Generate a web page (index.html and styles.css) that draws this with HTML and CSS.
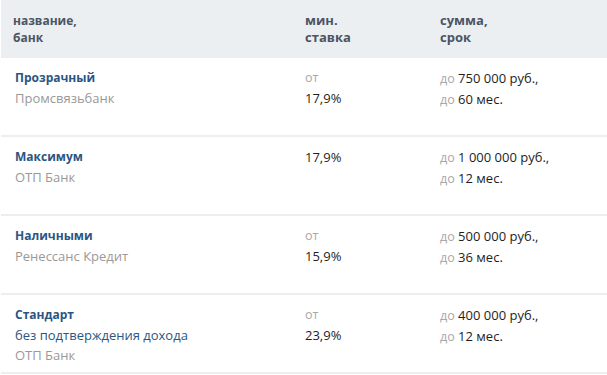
FILE: index.html
```html
<!DOCTYPE html>
<html lang="ru">
<head>
<meta charset="utf-8">
<link rel="stylesheet" href="styles.css">
</head>
<body>
<div class="table">
  <div class="row head">
    <div class="c1">название,<br>банк</div>
    <div class="c2">мин.<br>ставка</div>
    <div class="c3">сумма,<br>срок</div>
  </div>
  <div class="row">
    <div class="c1"><div class="name">Прозрачный</div><div class="bank">Промсвязьбанк</div></div>
    <div class="c2"><div class="muted">от</div><div>17,9%</div></div>
    <div class="c3"><div><span class="muted">до</span> 750 000 руб.,</div><div><span class="muted">до</span> 60 мес.</div></div>
  </div>
  <div class="row">
    <div class="c1"><div class="name">Максимум</div><div class="bank">ОТП Банк</div></div>
    <div class="c2"><div>17,9%</div></div>
    <div class="c3"><div><span class="muted">до</span> 1 000 000 руб.,</div><div><span class="muted">до</span> 12 мес.</div></div>
  </div>
  <div class="row">
    <div class="c1"><div class="name">Наличными</div><div class="bank">Ренессанс Кредит</div></div>
    <div class="c2"><div class="muted">от</div><div>15,9%</div></div>
    <div class="c3"><div><span class="muted">до</span> 500 000 руб.,</div><div><span class="muted">до</span> 36 мес.</div></div>
  </div>
  <div class="row">
    <div class="c1"><div class="name">Стандарт</div><div class="sub">без подтверждения дохода</div><div class="bank">ОТП Банк</div></div>
    <div class="c2"><div class="muted">от</div><div>23,9%</div></div>
    <div class="c3"><div><span class="muted">до</span> 400 000 руб.,</div><div><span class="muted">до</span> 12 мес.</div></div>
  </div>
</div>
</body>
</html>
```
FILE: styles.css
```css
html, body { margin: 0; padding: 0; background: #fff; }
body {
  font-family: "Open Sans", "Noto Sans", sans-serif;
  font-size: 13px;
  color: #1e1e1e;
}
.table { margin-left: 1px; }
.row {
  display: grid;
  grid-template-columns: 290px 135px 1fr;
  padding: 10px 14px 0;
  height: 67px;
  line-height: 20px;
  border-bottom: 2px solid #eceff1;
}
.row.head {
  background: #eceff1;
  border-bottom: 0;
  height: 58px;
  padding: 12px 12px 0;
  box-sizing: border-box;
  line-height: 17px;
  font-size: 12px;
  font-weight: 700;
  color: #4b5563;
}
.row.head .c2 { padding-left: 2px; }
.row.head .c3 { padding-left: 2px; }
.c2, .c3 { font-size: 13px; }
.name { color: #2b5583; font-weight: 700; font-size: 12px; }
.sub { color: #2b5583; }
.bank { color: #999; }
.muted { color: #a8a8a8; font-size: 12.5px; }
```
